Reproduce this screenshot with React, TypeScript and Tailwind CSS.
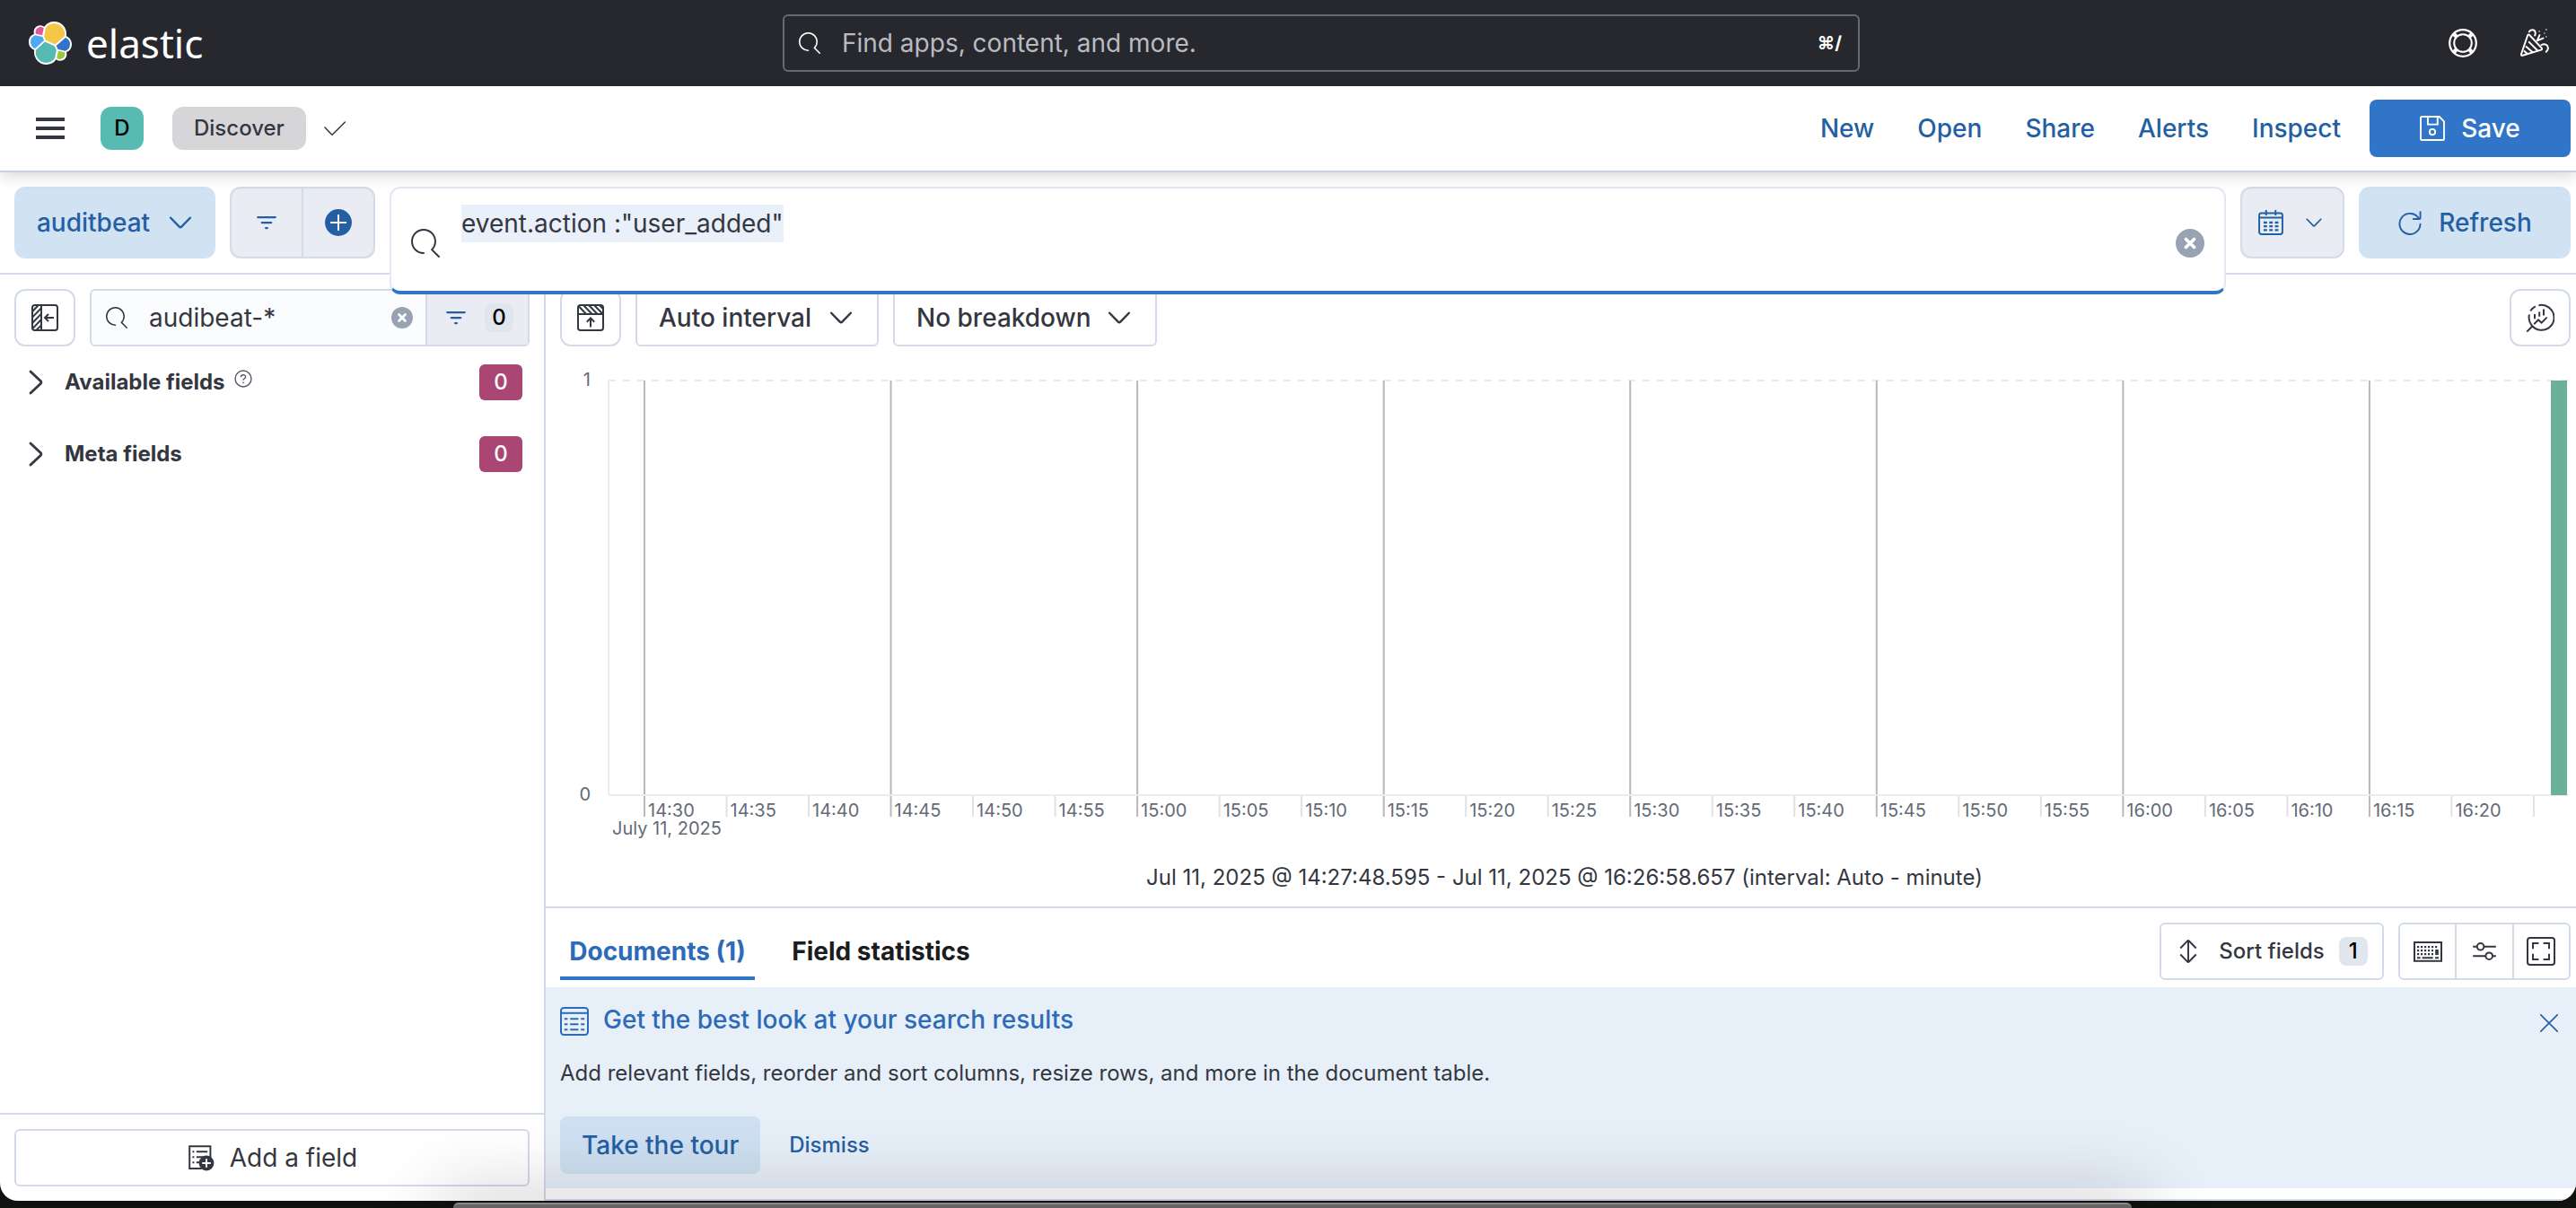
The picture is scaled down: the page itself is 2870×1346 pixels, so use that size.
import { useEffect, useRef, useState, type ReactNode } from "react";

type IconProps = { className?: string };

function Icon({ className = "size-8", children }: IconProps & { children: ReactNode }) {
  return (
    <svg viewBox="0 0 16 16" fill="none" stroke="currentColor" aria-hidden="true" className={`shrink-0 ${className}`}>
      {children}
    </svg>
  );
}

const SearchIcon = ({ className }: IconProps) => (
  <Icon className={className}>
    <path
      fill="currentColor"
      stroke="none"
      d="M11.271 11.978l3.872 3.873a.502.502 0 00.708 0 .502.502 0 000-.708l-3.565-3.564c2.38-2.747 2.267-6.923-.342-9.532-2.73-2.73-7.17-2.73-9.898 0-2.728 2.729-2.728 7.17 0 9.9a6.955 6.955 0 004.949 2.05.5.5 0 000-1 5.96 5.96 0 01-4.242-1.757 6.01 6.01 0 010-8.486 6.004 6.004 0 018.484 0 6.01 6.01 0 010 8.486.5.5 0 000 .708z"
    />
  </Icon>
);

const ChevronDown = ({ className }: IconProps) => (
  <Icon className={className}>
    <path d="M1.800 5l5.500 5.700q.7.7 1.4 0L14.200 5" strokeWidth="1.4" strokeLinecap="round" />
  </Icon>
);

const ChevronRight = ({ className }: IconProps) => (
  <Icon className={className}>
    <path d="M5 2l5.6 5.3q.7.7 0 1.4L5 14" strokeWidth="1.4" strokeLinecap="round" />
  </Icon>
);

const FilterIcon = ({ className }: IconProps) => (
  <Icon className={className}>
    <path d="M1.5 4h13M4.5 8h7M7.400 12h1.200" strokeWidth="1.5" strokeLinecap="round" />
  </Icon>
);

const ClearIcon = ({ className }: IconProps) => (
  <Icon className={className}>
    <circle cx="8" cy="8" r="8" fill="#98A2B3" stroke="none" />
    <path d="M5.7 5.7l4.6 4.6M10.3 5.7l-4.6 4.6" stroke="#fff" strokeWidth="1.8" strokeLinecap="round" />
  </Icon>
);

const ElasticLogo = () => (
  <svg viewBox="0 0 32 32" aria-hidden="true" className="size-12">
    <path fill="#fff" d="M32 16.77c0-2.68-1.664-5.038-4.153-5.947.11-.566.166-1.147.166-1.727A9.093 9.093 0 0018.924 0a9.075 9.075 0 00-7.366 3.76 4.83 4.83 0 00-2.957-1.008 4.844 4.844 0 00-4.554 6.467A6.376 6.376 0 000 15.203a6.364 6.364 0 004.173 5.968c-.11.567-.166 1.147-.166 1.734a9.073 9.073 0 009.068 9.067 9.06 9.06 0 007.366-3.767 4.79 4.79 0 002.957 1.015 4.844 4.844 0 004.554-6.468A6.362 6.362 0 0032 16.77" />
    <path fill="#F5C746" d="M12.58 13.787l7.002 3.211 7.066-6.213a7.85 7.85 0 00.152-1.557c0-4.287-3.494-7.781-7.781-7.781a7.783 7.783 0 00-6.426 3.404l-1.174 6.097 1.161 2.84z" />
    <path fill="#55BAB2" d="M5.333 21.241a7.996 7.996 0 00-.151 1.581 7.812 7.812 0 007.802 7.802 7.81 7.81 0 006.453-3.418l1.161-6.067-1.553-2.976-7.03-3.203-6.682 6.28z" />
    <path fill="#DF5897" d="M5.291 9.098l4.797 1.134 1.051-5.455a3.795 3.795 0 00-5.848 4.32" />
    <path fill="#4FA8F0" d="M4.872 10.242a5.299 5.299 0 00-3.542 5c0 2.171 1.347 4.114 3.368 4.887l6.734-6.085-1.236-2.64-5.324-1.162z" />
    <path fill="#98C93C" d="M20.873 27.198a3.783 3.783 0 002.296.788 3.795 3.795 0 003.562-5.104l-4.789-1.12-1.069 5.436z" />
    <path fill="#3273C8" d="M21.848 20.6l5.278 1.23a5.318 5.318 0 003.542-5.006 5.24 5.24 0 00-3.36-4.88l-6.907 6.05 1.447 2.606z" />
  </svg>
);

const HelpRing = () => (
  <Icon>
    <circle cx="8" cy="8" r="7.4" strokeWidth="1.1" />
    <circle cx="8" cy="8" r="4.9" strokeWidth="1" />
    <path d="M2.9 2.9l1.7 1.7M13.1 2.9l-1.7 1.7M2.9 13.1l1.7-1.7M13.1 13.1l-1.7-1.7" strokeWidth="2.2" />
  </Icon>
);

const CheerIcon = () => (
  <Icon>
    <path
      d="M4.1 3.6q.5-.8 1.1 0l6.6 7.1q.6.8-.3 1.1L1.3 14.9q-1 .2-.8-.8zM4.600 7.200l5.200 5.200M3 9.800l4 3.500M2 12.200l2.200 2"
      strokeWidth="1"
      strokeLinejoin="round"
    />
    <path d="M4.9 1.7C5.6.3 7.8.2 8.3 1.8c.2.8 0 1.3-.2 2M9.4 6.6l1.3-3M9.4 6.6l3.3-1.3M11.8 9c1.7-1 3.5 0 3.6 1.6.1 1-.3 1.7-1 2.2" strokeWidth="1" strokeLinecap="round" />
    <path d="M10.2 1.5h.8M14 .5h.8M13 2.6h.8M14 4.4h.8" stroke="#9A9CA2" strokeWidth=".9" />
  </Icon>
);

const SaveIcon = () => (
  <Icon className="size-7">
    <path d="M.6 1.2q0-.6.6-.6h11.2l3 3v11.2q0 .6-.6.6H1.2q-.6 0-.6-.6zM5.1.8v4.7h6.2V.8" strokeWidth="1.1" />
    <circle cx="8" cy="10.3" r="1.8" strokeWidth="1.1" />
  </Icon>
);

const CalendarIcon = () => (
  <Icon className="size-7">
    <rect x=".6" y="2" width="14.8" height="13.4" rx="1.4" strokeWidth="1.1" />
    <path d="M.6 4.9h14.8M5 0v3.4M11 0v3.4" strokeWidth="1.1" />
    <path d="M3.4 8h9.4M3.4 10.4h9.4M3.4 12.8h9.4" strokeWidth="1.3" strokeDasharray="2.2 1.4" />
  </Icon>
);

const RefreshIcon = () => (
  <Icon className="size-7">
    <path d="M13.7 5.5A6.6 6.6 0 1 0 14.6 9M14.6 1.2v3.9q0 .6-.6.6h-3.8" strokeWidth="1.1" strokeLinecap="round" />
  </Icon>
);

const PanelLeftIcon = () => (
  <Icon>
    <rect x="1" y="1" width="14" height="14" rx="1.4" strokeWidth="1" />
    <path d="M6 1v14M1 4.6L4.4 1M1 7.8L6 2.6M1 11L6 5.8M1 14.2L6 9M3.2 15L6 12.2M13 8H8.2M10 6L8 8l2 2" strokeWidth="1" />
  </Icon>
);

const PanelTopIcon = () => (
  <Icon>
    <rect x="1" y="1" width="14" height="14" rx="1.4" strokeWidth="1" />
    <path d="M1 6h14M1.4 1.6L5.6 6M4 1l4.8 5M7 1l4.8 5M10 1l4.8 5M13 1l2 2.2M8 13.2V8.4M5.9 10.4L8 8.2l2.1 2.2" strokeWidth="1" />
  </Icon>
);

const LensIcon = () => (
  <Icon>
    <path d="M2 6.2A7 7 0 1 0 7.2 1.1M2.6 4.3A7 7 0 0 1 5.4 1.7M3.4 13L.6 15.8M5 8.6V6M7.6 7.4V4.8M10 6.8V3.2M4.6 11.6l2.4-2.4 1.8 1.6 3-3" strokeWidth="1" />
  </Icon>
);

const SortIcon = () => (
  <Icon className="size-7">
    <path d="M8 1v14M3 6l4.5-4.6q.5-.5 1 0L13 6M3 10l4.5 4.6q.5.5 1 0L13 10" strokeWidth="1.1" />
  </Icon>
);

const KeyboardIcon = () => (
  <Icon>
    <rect x=".5" y="3" width="15" height="10.4" strokeWidth="1" />
    <path d="M2 5.6h12M2 7.6h9M2 9.6h9" strokeWidth="1.1" strokeDasharray="1.1 .9" />
    <path d="M2 11.6h1.8M4.8 11.6h6M12 11.6h2" strokeWidth="1" />
    <path d="M13 7v3" strokeWidth="1.8" />
  </Icon>
);

const SlidersIcon = () => (
  <Icon>
    <path d="M1.6 5.4H4M8 5.4h6.4M1.6 10.6h7M12.6 10.6h1.8" strokeWidth="1" />
    <circle cx="5.8" cy="5.4" r="1.9" strokeWidth="1" />
    <circle cx="10.6" cy="10.6" r="1.9" strokeWidth="1" />
  </Icon>
);

const FullScreenIcon = () => (
  <Icon>
    <rect x=".5" y=".5" width="15" height="15" rx="1.4" strokeWidth="1" />
    <path d="M3.5 6.6V3.5h3.2M9.3 3.5h3.2v3.1M12.5 9.4v3.1H9.3M6.7 12.5H3.5V9.4" strokeWidth="1" />
  </Icon>
);

const TableIcon = () => (
  <Icon>
    <rect x=".5" y=".5" width="15" height="15" rx="1.6" strokeWidth="1" />
    <path d="M.5 3.4h15" strokeWidth="1" />
    <path d="M2.4 6.6h1.8M5.6 6.6h4.6M11.6 6.6h2M2.4 9.6h1.8M5.6 9.6h4.6M11.6 9.6h2M2.4 12.6h1.8M5.6 12.6h4.6M11.6 12.6h2" strokeWidth="1" />
  </Icon>
);

const AddFieldIcon = () => (
  <Icon>
    <path d="M8.4 14H1.6V1.6h11.6V8" strokeWidth="1" />
    <path d="M3.2 4.6h1M5.4 4.6h6.2M3.2 7.6h1M5.4 7.6h4.2M3.2 10.6h1M5.4 10.6h2.2" strokeWidth="1" />
    <circle cx="11" cy="11" r="4.2" fill="currentColor" stroke="none" />
    <path d="M11 8.6v4.8M8.6 11h4.8" stroke="#fff" strokeWidth="1" />
  </Icon>
);

function GlobalHeader() {
  return (
    <header className="flex h-24 shrink-0 items-center justify-between bg-[#27282D] pl-8 pr-3.5 text-white">
      <a href="#home" className="flex w-[200px] items-center gap-4">
        <ElasticLogo />
        <span className="font-['Noto_Sans'] text-[44px] leading-[48px]">elastic</span>
      </a>
      <label className="flex h-16 w-[1200px] items-center rounded-md border-2 border-[#67696D] px-4">
        <SearchIcon className="size-6" />
        <input
          aria-label="Find apps, content, and more."
          placeholder="Find apps, content, and more."
          className="ml-6 min-w-0 flex-1 bg-transparent text-[28px] outline-none placeholder:text-[#B9BBC1]"
        />
        <span className="pr-0.5 text-xl font-bold">⌘/</span>
      </label>
      <div className="flex w-36 justify-between px-4">
        <button aria-label="Help menu">
          <HelpRing />
        </button>
        <button aria-label="What's new">
          <CheerIcon />
        </button>
      </div>
    </header>
  );
}

function AppHeader() {
  return (
    <nav className="relative z-20 flex h-24 shrink-0 items-center border-b-2 border-[#CAD3E2] bg-white pr-1.5 shadow-[0_4px_16px_rgba(0,0,0,0.16)]">
      <button aria-label="Toggle primary navigation" className="ml-10">
        <svg viewBox="0 0 32 24" className="h-6 w-8" fill="#343741" aria-hidden="true">
          <path d="M0 0h32v4H0zM0 10h32v4H0zM0 20h32v4H0z" />
        </svg>
      </button>
      <button className="ml-10 size-12 rounded-xl bg-[#57BAB3] text-2xl font-medium text-black">D</button>
      <button className="ml-8 h-12 rounded-xl bg-[#D6D6D8] px-6 text-2xl font-medium text-[#343741]">Discover</button>
      <svg viewBox="0 0 24 16" className="ml-5 h-4 w-6" fill="none" stroke="#343741" strokeWidth="1.5" aria-hidden="true">
        <path d="M1 7l7.4 7.8q.6.5 1.2 0L23.4 1" strokeLinecap="round" />
      </svg>
      <div className="ml-auto flex items-center gap-12 text-[28px] font-medium text-[#255FA3]">
        {["New", "Open", "Share", "Alerts", "Inspect"].map((item) => (
          <a key={item} href={`#${item.toLowerCase()}`}>
            {item}
          </a>
        ))}
      </div>
      <button className="ml-8 flex h-16 w-56 items-center justify-center gap-[18px] rounded-lg bg-[#3175C8] text-[28px] font-medium text-white">
        <SaveIcon />
        Save
      </button>
    </nav>
  );
}

function QueryBar() {
  const [query, setQuery] = useState('event.action :"user_added"');
  const box = useRef<HTMLTextAreaElement>(null);
  useEffect(() => {
    box.current?.select();
  }, []);
  return (
    <div className="flex h-[114px] shrink-0 items-start gap-4 border-b-2 border-[#D3DAE8] pl-4 pr-1.5 pt-4">
      <button className="flex h-20 w-56 items-center justify-center gap-5 rounded-xl bg-[#D1E2F2] text-[28px] font-medium text-[#255FA3]">
        auditbeat
        <ChevronDown className="size-7" />
      </button>
      <div className="flex h-20 w-[162px] divide-x-2 divide-[#D3DAE8] overflow-hidden rounded-xl border-2 border-[#D3DAE8] bg-[#E9ECF2] text-[#255FA3]">
        <button aria-label="Saved query menu" className="flex flex-1 items-center justify-center">
          <FilterIcon className="size-6" />
        </button>
        <button aria-label="Add filter" className="flex flex-1 items-center justify-center">
          <svg viewBox="0 0 32 32" className="size-8" aria-hidden="true">
            <circle cx="16" cy="16" r="15" fill="#255FA3" />
            <path d="M16 7v18M7 16h18" stroke="#fff" strokeWidth="2" />
          </svg>
        </button>
      </div>
      <div className="relative z-10 -mb-10 flex h-[120px] flex-1 overflow-hidden rounded-xl border-2 border-b-4 border-[#E3E8F2] border-b-[#3175C8] bg-white px-[22px] text-[#343741]">
        <SearchIcon className="mt-[45px] size-8" />
        <textarea
          ref={box}
          aria-label="Search with KQL"
          spellCheck={false}
          value={query}
          onChange={(e) => setQuery(e.target.value)}
          className="ml-6 mt-[18px] flex-1 resize-none text-[28px] leading-[42px] outline-none selection:bg-[#E9F0F9] selection:text-[#343741]"
        />
        <button aria-label="Clear query" className="mt-[45px] self-start" onClick={() => setQuery("")}>
          <ClearIcon className="size-8" />
        </button>
      </div>
      <button
        aria-label="Date quick select"
        className="flex h-20 w-[116px] items-center justify-between rounded-xl border-2 border-[#D3DAE8] bg-[#E9ECF2] pl-[18px] pr-[22px] text-[#255FA3]"
      >
        <CalendarIcon />
        <ChevronDown className="size-5" />
      </button>
      <button className="flex h-20 w-[236px] items-center justify-center gap-[18px] rounded-xl bg-[#D1E2F2] text-[28px] font-medium text-[#255FA3]">
        <RefreshIcon />
        Refresh
      </button>
    </div>
  );
}

function FieldGroup({ title, help }: { title: string; help?: boolean }) {
  return (
    <button className="flex h-10 items-center text-left">
      <ChevronRight className="size-8" />
      <span className="ml-4 text-2xl font-bold">{title}</span>
      {help && (
        <svg viewBox="0 0 20 20" className="-mt-2 ml-2.5 size-5" fill="none" stroke="#535966" strokeWidth="1.4" aria-hidden="true">
          <circle cx="10" cy="10" r="9" />
          <path d="M7.4 8.2c0-3.4 5.3-3.2 5.2-.2 0 1.7-2.6 1.8-2.6 3.8M10 13.4v1.8" />
        </svg>
      )}
      <span className="ml-auto flex h-10 w-12 items-center justify-center rounded-md bg-[#AB4674] text-2xl font-medium text-white">0</span>
    </button>
  );
}

function Sidebar() {
  const [fieldName, setFieldName] = useState("audibeat-*");
  return (
    <aside className="flex w-[608px] shrink-0 flex-col border-r-2 border-[#D3DAE8] text-[#343741]">
      <div className="flex gap-4 px-4 pt-4">
        <button aria-label="Hide sidebar" className="flex h-16 w-[68px] items-center justify-center rounded-xl border-2 border-[#D3DAE8]">
          <PanelLeftIcon />
        </button>
        <div className="flex h-16 min-w-0 flex-1 items-center rounded-md border-2 border-[#D3DAE8] bg-[#FBFCFE]">
          <SearchIcon className="ml-4 size-6" />
          <input
            aria-label="Search field names"
            value={fieldName}
            onChange={(e) => setFieldName(e.target.value)}
            className="ml-6 w-full min-w-0 flex-1 bg-transparent text-[28px] outline-none"
          />
          <button aria-label="Clear field search" onClick={() => setFieldName("")}>
            <ClearIcon className="size-6" />
          </button>
          <button aria-label="Filter by type" className="ml-3.5 flex h-full w-[114px] items-center justify-end gap-5 border-l-2 border-[#D3DAE8] bg-[#E9ECF2] pr-4">
            <FilterIcon className="size-6 text-[#255FA3]" />
            <span className="flex size-8 items-center justify-center rounded-lg bg-[#E0E5EE] text-2xl font-medium text-black">0</span>
          </button>
        </div>
      </div>
      <div className="flex flex-1 flex-col gap-10 px-6 pt-5">
        <FieldGroup title="Available fields" help />
        <FieldGroup title="Meta fields" />
      </div>
      <div className="border-t-2 border-[#D3DAE8] px-4 py-4">
        <button className="flex h-16 w-full items-center justify-center gap-4 rounded-md border-2 border-[#D3DAE8] text-[28px]">
          <AddFieldIcon />
          Add a field
        </button>
      </div>
    </aside>
  );
}

function ChartSelect({ label, option, width }: { label: string; option: string; width: string }) {
  return (
    <div className={`relative h-16 ${width}`}>
      <select aria-label={label} className="h-full w-full appearance-none rounded-md border-2 border-[#D3DAE8] bg-white pl-6 text-[28px] font-medium">
        <option>{option}</option>
      </select>
      <ChevronDown className="pointer-events-none absolute right-7 top-[18px] size-7" />
    </div>
  );
}

const PLOT_WIDTH = 2184;
const TICKS = Array.from({ length: 24 }, (_, i) => {
  const minutes = 14 * 60 + 30 + i * 5;
  return {
    x: `${((40 + i * 91.52) / PLOT_WIDTH) * 100}%`,
    label: i < 23 ? `${Math.floor(minutes / 60)}:${String(minutes % 60).padStart(2, "0")}` : "",
    major: i % 3 === 0,
  };
});

function Histogram() {
  return (
    <div className="pl-[70px] pr-2">
      <svg className="block h-[560px] w-full overflow-visible text-xl" fill="#646A77" role="img" aria-label="Document count over time">
        <line x1="0" x2="100%" y1="38" y2="38" stroke="#E9ECF1" strokeWidth="2" strokeDasharray="8 8" />
        <line x1="0" x2="0" y1="38" y2="499" stroke="#E9ECF1" strokeWidth="2" />
        {TICKS.map((t) => (
          <g key={t.x}>
            {t.major && <line x1={t.x} x2={t.x} y1="38" y2="499" stroke="#B9B9B9" strokeWidth="2" />}
            <line x1={t.x} x2={t.x} y1="500" y2="524" stroke={t.major ? "#B9B9B9" : "#E1E1E2"} strokeWidth="2" />
            <text x={t.x} dx="4" y="524">
              {t.label}
            </text>
          </g>
        ))}
        <line x1="0" x2="100%" y1="500" y2="500" stroke="#E9ECF1" strokeWidth="2" />
        <rect x={`${(2164 / PLOT_WIDTH) * 100}%`} y="38" width={`${(18 / PLOT_WIDTH) * 100}%`} height="462" fill="#6DB09A" />
        <text x="-20" y="44" textAnchor="end">1</text>
        <text x="-20" y="506" textAnchor="end">0</text>
        <text x="4" y="544">July 11, 2025</text>
      </svg>
    </div>
  );
}

function Results() {
  return (
    <main className="flex min-w-0 flex-1 flex-col border-b-2 border-[#D3DAE8] text-[#343741]">
      <section className="flex h-[706px] shrink-0 flex-col border-b-2 border-[#D3DAE8] pt-4">
        <div className="flex gap-4 pl-4 pr-1.5">
          <button aria-label="Hide chart" className="flex h-16 w-[68px] items-center justify-center rounded-xl border-2 border-[#D3DAE8]">
            <PanelTopIcon />
          </button>
          <ChartSelect label="Time interval" option="Auto interval" width="w-[271px]" />
          <ChartSelect label="Break down by" option="No breakdown" width="w-[294px]" />
          <button aria-label="Edit visualization" className="ml-auto flex h-16 w-[68px] items-center justify-center rounded-xl border-2 border-[#D3DAE8]">
            <LensIcon />
          </button>
        </div>
        <Histogram />
        <p className="mt-3.5 pl-2 text-center text-2xl leading-9">
          Jul 11, 2025 @ 14:27:48.595 - Jul 11, 2025 @ 16:26:58.657 (interval: Auto - minute)
        </p>
      </section>
      <div className="flex h-[88px] shrink-0 pb-2 pl-4 pr-1.5 pt-4">
        <div role="tablist" className="flex h-full gap-8 text-[28px] font-bold">
          <button role="tab" aria-selected="true" className="w-[217px] border-b-4 border-[#3175C8] pt-1 text-[#2D6BB8]">
            Documents (1)
          </button>
          <button role="tab" aria-selected="false" className="w-[217px] border-b-4 border-transparent pt-1 text-[#1A1C21]">
            Field statistics
          </button>
        </div>
        <button className="ml-auto flex h-16 w-[250px] items-center justify-center rounded-md border-2 border-[#D3DAE8] text-2xl font-medium">
          <SortIcon />
          <span className="ml-5">Sort fields</span>
          <span className="ml-4 flex size-8 items-center justify-center rounded-lg bg-[#E0E5EE] text-black">1</span>
        </button>
        <div className="ml-4 flex h-16 w-48 divide-x-2 divide-[#D3DAE8] rounded-md border-2 border-[#D3DAE8]">
          <button aria-label="Keyboard shortcuts" className="flex flex-1 items-center justify-center">
            <KeyboardIcon />
          </button>
          <button aria-label="Display options" className="flex flex-1 items-center justify-center">
            <SlidersIcon />
          </button>
          <button aria-label="Full screen" className="flex flex-1 items-center justify-center">
            <FullScreenIcon />
          </button>
        </div>
      </div>
      <section className="mb-3 flex flex-1 items-start justify-between bg-[#E7EFF9] pl-4 pr-5 pt-5">
        <div>
          <h2 className="flex h-8 gap-4 text-[28px] font-medium leading-8 text-[#2D6BB8]">
            <span className="pt-0.5">
              <TableIcon />
            </span>
            Get the best look at your search results
          </h2>
          <p className="mt-[26px] text-2xl leading-9">Add relevant fields, reorder and sort columns, resize rows, and more in the document table.</p>
          <div className="mt-[30px] flex items-center gap-8 font-medium text-[#255FA3]">
            <button className="h-16 rounded-lg bg-[#CEE0F1] px-6 text-[28px]">Take the tour</button>
            <button className="text-2xl">Dismiss</button>
          </div>
        </div>
        <button aria-label="Close callout" className="mt-2.5 text-[#255FA3]">
          <svg viewBox="0 0 20 20" className="size-5" stroke="currentColor" strokeWidth="1.6" aria-hidden="true">
            <path d="M0 0l20 20M20 0L0 20" />
          </svg>
        </button>
      </section>
    </main>
  );
}

export default function App() {
  return (
    <div className="relative flex h-screen flex-col overflow-hidden bg-[#10120F] pb-2 font-[Inter,sans-serif]">
      <div className="flex min-h-0 flex-1 flex-col overflow-hidden rounded-b-[20px] bg-white">
        <GlobalHeader />
        <AppHeader />
        <QueryBar />
        <div className="flex min-h-0 flex-1">
          <Sidebar />
          <Results />
        </div>
      </div>
      <div className="pointer-events-none absolute bottom-0 left-[505px] right-[495px] z-30 h-1.5 rounded-t-[20px] border-t-2 border-[#8A8A8A] bg-[#666465] shadow-[0_10px_80px_20px_rgba(0,0,0,0.22)]" />
    </div>
  );
}
